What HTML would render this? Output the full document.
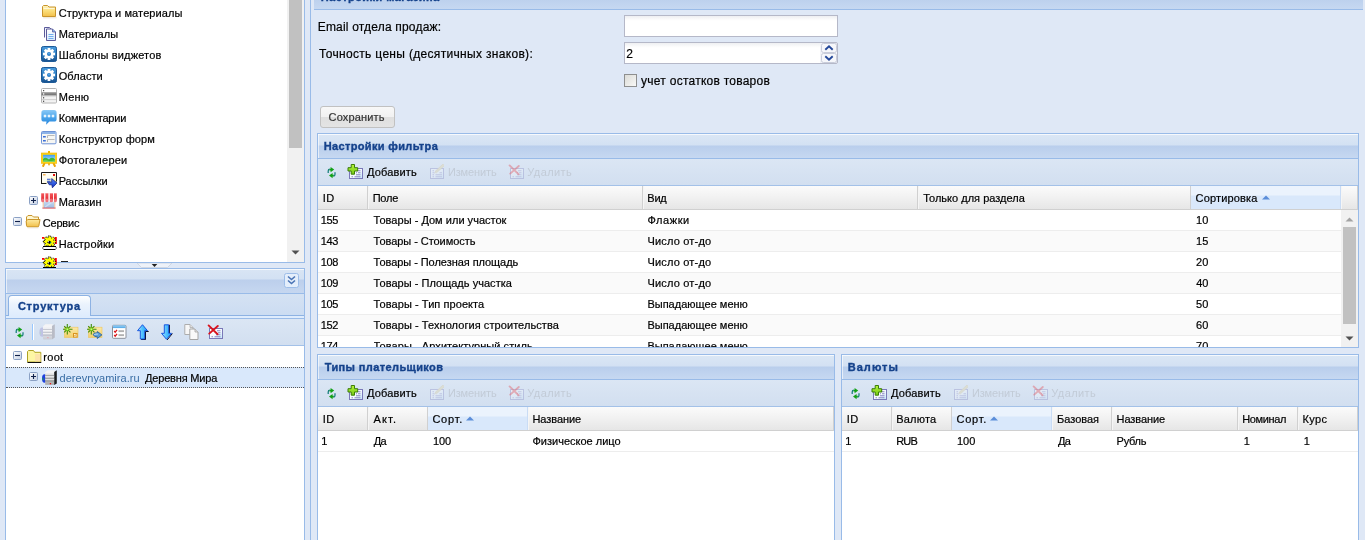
<!DOCTYPE html>
<html><head><meta charset="utf-8"><title>Admin</title>
<style>
html,body{margin:0;padding:0;}
body{width:1365px;height:540px;overflow:hidden;background:#dfe8f6;position:relative;font-family:"Liberation Sans",sans-serif;}
div,span,svg{position:absolute;display:block;}
span{white-space:pre;line-height:1;}
div>svg{left:0;top:0;}
</style></head><body>
<div style="left:5px;top:-10px;width:300px;height:273px;background:#fff;border:1px solid #99bbe8;box-sizing:border-box;"></div>
<div style="left:287px;top:-10px;width:17px;height:272px;background:#f1f1f1;"></div>
<div style="left:289px;top:-10px;width:13px;height:158px;background:#c1c1c1;"></div>
<svg style="left:291px;top:250px" width="9" height="5"><path d="M0.5 0.5h8l-4 4z" fill="#505050"/></svg>
<div style="left:41px;top:4px;width:16px;height:16px;"><svg width="16" height="16" viewBox="0 0 16 16"><defs><linearGradient id="g1" x1="0" y1="0" x2="0" y2="1"><stop offset="0" stop-color="#fef4c4"/><stop offset="0.45" stop-color="#fbe07e"/><stop offset="1" stop-color="#f3c049"/></linearGradient></defs><path d="M2.2 13.8h13.3" stroke="#e9e2cf" stroke-width="1"/><path d="M1.5 12.5v-10l1-1h4l1.5 1.5h6.5v9.5z" fill="url(#g1)" stroke="#c9952c" stroke-width="1"/><path d="M2.5 4.5h11" stroke="#fff8dc" stroke-width="1" opacity=".9"/></svg></div>
<div style="left:41px;top:25px;width:16px;height:16px;"><svg width="16" height="16" viewBox="0 0 16 16"><defs><linearGradient id="g3" x1="0" y1="0" x2="0" y2="1"><stop offset="0" stop-color="#ffffff"/><stop offset="1" stop-color="#d6e9fb"/></linearGradient></defs><path d="M3.5 12.5v-10h5l2 2" fill="#f2f4fb" stroke="#5b5b9b"/><path d="M5.5 15.5v-11.5h6l3 3v8.5z" fill="url(#g3)" stroke="#5b5b9b"/><path d="M11.5 4v3h3" fill="#7db4ee" stroke="#5b5b9b" stroke-width=".8"/><path d="M7.5 9.5h5M7.5 11.5h5M7.5 13.5h5" stroke="#72aeee" stroke-width="1.2"/></svg></div>
<div style="left:41px;top:46px;width:16px;height:16px;"><svg width="16" height="16" viewBox="0 0 16 16"><defs><linearGradient id="g4" x1="0" y1="0" x2="0" y2="1"><stop offset="0" stop-color="#4a9bdc"/><stop offset="0.5" stop-color="#2d7fc4"/><stop offset="1" stop-color="#174f8c"/></linearGradient></defs><rect x="0.5" y="0.5" width="15" height="15" rx="1.8" fill="url(#g4)" stroke="#1d5a97"/><polygon points="6.65,1.95 9.35,1.95 9.47,3.85 9.90,4.03 11.32,2.76 13.24,4.68 11.97,6.10 12.15,6.53 14.05,6.65 14.05,9.35 12.15,9.47 11.97,9.90 13.24,11.32 11.32,13.24 9.90,11.97 9.47,12.15 9.35,14.05 6.65,14.05 6.53,12.15 6.10,11.97 4.68,13.24 2.76,11.32 4.03,9.90 3.85,9.47 1.95,9.35 1.95,6.65 3.85,6.53 4.03,6.10 2.76,4.68 4.68,2.76 6.10,4.03 6.53,3.85" fill="#fff"/><circle cx="8" cy="8" r="2" fill="#2b7cc4"/><circle cx="8" cy="7.6" r="1" fill="#5aa6e6"/></svg></div>
<div style="left:41px;top:67px;width:16px;height:16px;"><svg width="16" height="16" viewBox="0 0 16 16"><defs><linearGradient id="g4" x1="0" y1="0" x2="0" y2="1"><stop offset="0" stop-color="#4a9bdc"/><stop offset="0.5" stop-color="#2d7fc4"/><stop offset="1" stop-color="#174f8c"/></linearGradient></defs><rect x="0.5" y="0.5" width="15" height="15" rx="1.8" fill="url(#g4)" stroke="#1d5a97"/><polygon points="6.65,1.95 9.35,1.95 9.47,3.85 9.90,4.03 11.32,2.76 13.24,4.68 11.97,6.10 12.15,6.53 14.05,6.65 14.05,9.35 12.15,9.47 11.97,9.90 13.24,11.32 11.32,13.24 9.90,11.97 9.47,12.15 9.35,14.05 6.65,14.05 6.53,12.15 6.10,11.97 4.68,13.24 2.76,11.32 4.03,9.90 3.85,9.47 1.95,9.35 1.95,6.65 3.85,6.53 4.03,6.10 2.76,4.68 4.68,2.76 6.10,4.03 6.53,3.85" fill="#fff"/><circle cx="8" cy="8" r="2" fill="#2b7cc4"/><circle cx="8" cy="7.6" r="1" fill="#5aa6e6"/></svg></div>
<div style="left:41px;top:88px;width:16px;height:16px;"><svg width="16" height="16" viewBox="0 0 16 16"><defs><linearGradient id="g5" x1="0" y1="0" x2="0" y2="1"><stop offset="0" stop-color="#9a9a9a"/><stop offset="1" stop-color="#6b6b6b"/></linearGradient></defs><rect x="0.5" y="0.5" width="15" height="14.5" rx="1" fill="#f3f3f3" stroke="#b4b4b4"/><rect x="1" y="1" width="14" height="3" fill="#fff"/><rect x="0.5" y="4.2" width="15" height="3.3" fill="url(#g5)"/><path d="M1 8h14M1 11.6h14" stroke="#c4c4c4" stroke-width=".8"/><rect x="2" y="2" width="1.2" height="1.2" fill="#555"/><rect x="2" y="5.3" width="1.3" height="1.3" fill="#fff"/><rect x="2" y="9.2" width="1.2" height="1.2" fill="#444"/><rect x="2" y="12.7" width="1.2" height="1.2" fill="#444"/></svg></div>
<div style="left:41px;top:109px;width:16px;height:16px;"><svg width="16" height="16" viewBox="0 0 16 16"><defs><linearGradient id="g6" x1="0" y1="0" x2="0" y2="1"><stop offset="0" stop-color="#8ccaf7"/><stop offset="0.45" stop-color="#4fa8ec"/><stop offset="1" stop-color="#2585dd"/></linearGradient></defs><path d="M3 1h10q2.6 0 2.6 2.6v6.3q0 2.6-2.6 2.6h-4.6l-3.3 3.2.4-3.2h-2.5q-2.6 0-2.6-2.6v-6.3q0-2.6 2.6-2.6z" fill="url(#g6)"/><circle cx="4" cy="7" r="1.7" fill="#9fd2f8"/><circle cx="8" cy="7" r="1.7" fill="#9fd2f8"/><circle cx="12" cy="7" r="1.7" fill="#9fd2f8"/><circle cx="4" cy="7" r="1" fill="#fff"/><circle cx="8" cy="7" r="1" fill="#fff"/><circle cx="12" cy="7" r="1" fill="#fff"/></svg></div>
<div style="left:41px;top:130px;width:16px;height:16px;"><svg width="16" height="16" viewBox="0 0 16 16"><rect x="0.5" y="1.5" width="14.5" height="12.3" rx="1" fill="#f6f6f3" stroke="#6d92d6"/><rect x="1" y="2" width="13.5" height="2" fill="#8db3e8"/><rect x="2" y="6" width="2.8" height="1.5" fill="#3b6fd8"/><rect x="2" y="10" width="2.8" height="1.5" fill="#3b6fd8"/><path d="M6.5 8v-2.5h7M6.5 12v-2.5h7" fill="none" stroke="#b9b9b9"/></svg></div>
<div style="left:41px;top:151px;width:16px;height:16px;"><svg width="16" height="16" viewBox="0 0 16 16"><defs><linearGradient id="g7" x1="0" y1="0" x2="0" y2="1"><stop offset="0" stop-color="#3c9df0"/><stop offset="1" stop-color="#cdeafc"/></linearGradient></defs><rect x="7" y="0" width="2" height="2.5" fill="#f0b400"/><path d="M3.6 12l-1.8 3.8M12.4 12l1.8 3.8" stroke="#e9a40c" stroke-width="2"/><rect x="7.2" y="12" width="1.6" height="2.3" fill="#e9a40c"/><rect x="0.2" y="2" width="15.6" height="10.3" fill="#fcd116"/><rect x="0.2" y="2" width="15.6" height="10.3" fill="none" stroke="#f0b400" stroke-width=".6"/><rect x="2" y="3.8" width="12" height="6.8" fill="url(#g7)"/><path d="M2 10.6v-2.6q2-2.2 4.5-.6l1.5 1q1.2-1.8 3.2-1.6t2.8 1.6v2.2z" fill="#3db83a"/><path d="M2 10.6v-1.2q2.5-1.5 5 0t7-.4v1.6z" fill="#6fd35a" opacity=".8"/></svg></div>
<div style="left:41px;top:172px;width:16px;height:16px;"><svg width="16" height="16" viewBox="0 0 16 16"><defs><linearGradient id="g8" x1="0" y1="0" x2="1" y2="1"><stop offset="0" stop-color="#ffffff"/><stop offset="0.5" stop-color="#fffef0"/><stop offset="1" stop-color="#fbf08a"/></linearGradient><linearGradient id="g9" x1="0" y1="0" x2="0" y2="1"><stop offset="0" stop-color="#5a8cff"/><stop offset="1" stop-color="#1030c0"/></linearGradient></defs><rect x="0.5" y="0.5" width="15" height="11" fill="url(#g8)"/><path d="M0.5 11.5v-11h15v9" fill="none" stroke="#1a1a1a" stroke-width="1"/><path d="M0 11.5h5.5" stroke="#1a1a1a"/><rect x="2" y="2.2" width="2.6" height="1.2" fill="#f0a030"/><rect x="12" y="2" width="2" height="2" fill="#e01010"/><path d="M6 7.2h3.5M6 9.2h3.5" stroke="#2a4fd0" stroke-width="1.1"/><path d="M6.5 10.2h4.2v-3.6l5.3 4.3-4.6 4.9-.6-3h-2.5z" fill="url(#g9)" stroke="#0a1a80" stroke-width=".7"/></svg></div>
<div style="left:41px;top:193px;width:16px;height:16px;"><svg width="16" height="16" viewBox="0 0 16 16"><defs><linearGradient id="g10" x1="0" y1="0" x2="0" y2="1"><stop offset="0" stop-color="#f4585c"/><stop offset="1" stop-color="#e0242c"/></linearGradient><linearGradient id="g11" x1="0" y1="0" x2="0" y2="1"><stop offset="0" stop-color="#c9dcf2"/><stop offset="1" stop-color="#9dbbe2"/></linearGradient></defs><rect x="2.6" y="8" width="10.8" height="7" fill="url(#g11)"/><path d="M4 14l8-5.5" stroke="#dbe8f8" stroke-width="1.5" opacity=".7"/><rect x="1.6" y="8.5" width="1.4" height="6.5" fill="#ecd0b4"/><rect x="13" y="8.5" width="1.4" height="6.5" fill="#ecd0b4"/><rect x="1.4" y="14.6" width="13.2" height="1" fill="#d9555c"/><rect x="0.2" y="0.3" width="3.1" height="7" fill="url(#g10)"/><rect x="4.2" y="0.3" width="3.4" height="7" fill="url(#g10)"/><rect x="8.6" y="0.3" width="3.4" height="7" fill="url(#g10)"/><rect x="12.9" y="0.3" width="2.9" height="7" fill="url(#g10)"/><ellipse cx="1.75" cy="7.4" rx="1.55" ry="1.9" fill="#f07078"/><ellipse cx="5.9" cy="7.4" rx="1.7" ry="1.9" fill="#f07078"/><ellipse cx="10.299999999999999" cy="7.4" rx="1.7" ry="1.9" fill="#f07078"/><ellipse cx="14.35" cy="7.4" rx="1.45" ry="1.9" fill="#f07078"/><rect x="3.3" y="0.3" width="1" height="8.6" fill="#fff6f6"/><rect x="7.6" y="0.3" width="1" height="8.6" fill="#fff6f6"/><rect x="12" y="0.3" width="1" height="8.6" fill="#fff6f6"/></svg></div>
<div style="left:25px;top:214px;width:16px;height:16px;"><svg width="16" height="16" viewBox="0 0 16 16"><defs><linearGradient id="g2" x1="0" y1="0" x2="0" y2="1"><stop offset="0" stop-color="#fdeaa0"/><stop offset="1" stop-color="#f1bf48"/></linearGradient></defs><path d="M1.5 11.5v-8.5l1.5-1.5h4l1.5 1.5h5v3" fill="#fef6cf" stroke="#c9952c"/><path d="M1.2 7.2l1.5-1.7h12.3l-1.2 6.4q-.2 1-1.2 1h-9.6q-1.4 0-1.5-1.3z" fill="url(#g2)" stroke="#c9952c"/><path d="M2.5 13.8h11" stroke="#e9e2cf"/></svg></div>
<div style="left:41px;top:235px;width:16px;height:16px;"><svg width="16" height="16" viewBox="0 0 16 16"><rect x="1" y="2" width="2.4" height="1.8" fill="#f00"/><rect x="13.6" y="2" width="2.2" height="7" fill="#f00"/><polygon points="7.25,0.92 9.75,0.92 10.01,2.90 10.27,3.00 11.98,1.77 13.75,3.40 12.42,4.97 12.52,5.21 14.67,5.45 14.67,7.75 12.52,7.99 12.42,8.23 13.75,9.80 11.98,11.43 10.27,10.20 10.01,10.30 9.75,12.28 7.25,12.28 6.99,10.30 6.73,10.20 5.02,11.43 3.25,9.80 4.58,8.23 4.48,7.99 2.33,7.75 2.33,5.45 4.48,5.21 4.58,4.97 3.25,3.40 5.02,1.77 6.73,3.00 6.99,2.90" fill="#ffff00" stroke="#000" stroke-width="1" stroke-dasharray="1.2 1"/><path d="M6 7.5l2-2 2.5 1.5-1.8 2z" fill="#000"/><path d="M9 7l1.5.8-.8 1z" fill="#0cc"/><path d="M7 7.2l1-.8" stroke="#fff"/><path d="M2 11.5h13M2.5 14.5h12" stroke="#000" stroke-width="1"/><path d="M2 12v2M15 12v2" stroke="#000" stroke-width=".8"/><rect x="2.5" y="12" width="12" height="2" fill="#fff"/></svg></div>
<div style="left:41px;top:256px;width:16px;height:16px;"><svg width="16" height="16" viewBox="0 0 16 16"><rect x="1" y="2" width="2.4" height="1.8" fill="#f00"/><rect x="13.6" y="2" width="2.2" height="7" fill="#f00"/><polygon points="7.25,0.92 9.75,0.92 10.01,2.90 10.27,3.00 11.98,1.77 13.75,3.40 12.42,4.97 12.52,5.21 14.67,5.45 14.67,7.75 12.52,7.99 12.42,8.23 13.75,9.80 11.98,11.43 10.27,10.20 10.01,10.30 9.75,12.28 7.25,12.28 6.99,10.30 6.73,10.20 5.02,11.43 3.25,9.80 4.58,8.23 4.48,7.99 2.33,7.75 2.33,5.45 4.48,5.21 4.58,4.97 3.25,3.40 5.02,1.77 6.73,3.00 6.99,2.90" fill="#ffff00" stroke="#000" stroke-width="1" stroke-dasharray="1.2 1"/><path d="M6 7.5l2-2 2.5 1.5-1.8 2z" fill="#000"/><path d="M9 7l1.5.8-.8 1z" fill="#0cc"/><path d="M7 7.2l1-.8" stroke="#fff"/><path d="M2 11.5h13M2.5 14.5h12" stroke="#000" stroke-width="1"/><path d="M2 12v2M15 12v2" stroke="#000" stroke-width=".8"/><rect x="2.5" y="12" width="12" height="2" fill="#fff"/></svg></div>
<div style="left:29px;top:196px;width:16px;height:16px;"><svg width="9" height="9" viewBox="0 0 9 9"><defs><linearGradient id="g12" x1="0" y1="0" x2="1" y2="1"><stop offset="0" stop-color="#ffffff"/><stop offset="1" stop-color="#c3cfe4"/></linearGradient></defs><rect x="0.5" y="0.5" width="8" height="8" rx="1" fill="url(#g12)" stroke="#8aa0c4"/><path d="M2 4.5h5M4.5 2v5" stroke="#10204a" stroke-width="1.1"/></svg></div>
<div style="left:13px;top:217px;width:16px;height:16px;"><svg width="9" height="9" viewBox="0 0 9 9"><defs><linearGradient id="g13" x1="0" y1="0" x2="1" y2="1"><stop offset="0" stop-color="#ffffff"/><stop offset="1" stop-color="#c3cfe4"/></linearGradient></defs><rect x="0.5" y="0.5" width="8" height="8" rx="1" fill="url(#g13)" stroke="#8aa0c4"/><path d="M2 4.5h5" stroke="#10204a" stroke-width="1.1"/></svg></div>
<div style="left:61px;top:261px;width:7px;height:1px;background:#222;"></div>
<svg style="left:137px;top:263px" width="35" height="5"><path d="M0 0h35l-4.5 4.5h-26z" fill="#eef2f9" stroke="#c9d2e0" stroke-width="0.8"/><path d="M14.7 1h5.6l-2.8 3z" fill="#222"/></svg>
<div style="left:5px;top:268px;width:300px;height:290px;background:#fff;border:1px solid #99bbe8;box-sizing:border-box;"></div>
<div style="left:6px;top:269px;width:298px;height:24px;background:linear-gradient(#d9e5f4 0,#d3e1f3 10px,#bccfec 11px,#c6d7f0 100%);"></div>
<div style="left:6px;top:293px;width:298px;height:1px;background:#99bbe8;"></div>
<div style="left:6px;top:269px;width:298px;height:1px;background:rgba(255,255,255,.75);"></div>
<div style="left:6px;top:269px;width:1px;height:24px;background:rgba(255,255,255,.6);"></div>
<svg style="left:284px;top:273px" width="15" height="15"><rect x="0.5" y="0.5" width="14" height="14" rx="2" fill="#e4eefb" stroke="#9dbde8"/><path d="M4 3.5l3.5 3 3.5-3M4 7.5l3.5 3 3.5-3" fill="none" stroke="#4a74b5" stroke-width="1.6"/></svg>
<div style="left:6px;top:294px;width:298px;height:22px;background:linear-gradient(#d5e2f3,#cbdcf2);"></div>
<div style="left:6px;top:315px;width:298px;height:1px;background:#8db2e3;"></div>
<div style="left:6px;top:316px;width:298px;height:2px;background:#deecfd;"></div>
<div style="left:6px;top:318px;width:298px;height:1px;background:#99bbe8;"></div>
<div style="left:8px;top:295px;width:83px;height:21px;background:linear-gradient(#fff 0,#ebf3fd 40%,#deecfd 100%);border:1px solid #8db2e3;border-bottom:none;border-radius:4px 4px 0 0;box-sizing:border-box;"></div>
<div style="left:6px;top:319px;width:298px;height:26px;background:linear-gradient(#dbe6f4,#d2dff0);"></div>
<div style="left:6px;top:345px;width:298px;height:1px;background:#a3c1e8;"></div>
<div style="left:12px;top:325px;width:16px;height:16px;"><svg width="16" height="16" viewBox="0 0 16 16"><path d="M6.6 1.9l3.6 2.7-3.6 2.7v-1.9h-1.2v-1.6h1.2z" fill="#12a116"/><path d="M5.6 4q-1.4.3-1.4 1.9v2" fill="none" stroke="#0e7a78" stroke-width="1.2"/><path d="M8.6 7.9l-3.6 2.7 3.6 2.7v-1.9h1.2v-1.6h-1.2z" fill="#12a116"/><path d="M9.6 11.2q1.4-.3 1.4-1.9v-2" fill="none" stroke="#0e7a78" stroke-width="1.2"/></svg></div>
<div style="left:32px;top:324px;width:1px;height:16px;background:#98c8ff;"></div>
<div style="left:33px;top:324px;width:1px;height:16px;background:#fff;"></div>
<div style="left:39px;top:324px;width:16px;height:16px;"><svg width="16" height="16" viewBox="0 0 16 16"><defs><linearGradient id="g20" x1="0" y1="0" x2="0" y2="1"><stop offset="0" stop-color="#f6f6f8"/><stop offset="1" stop-color="#c9ccd4"/></linearGradient></defs><ellipse cx="3.2" cy="8.2" rx="2.8" ry="4.6" fill="#bfc3e4"/><path d="M1 7q1.3 1 .9 3.5l-1-.6z" fill="#b7d4c8"/><path d="M4 2.2l2.3-2h7.7l-1 2z" fill="#f4f4f6"/><rect x="4" y="2" width="9" height="13.5" rx=".8" fill="url(#g20)"/><path d="M13 2l2.8-1.8v13.3l-2.8 2z" fill="#b9bcc6"/><path d="M4 5.5h9M4 8.5h9M4 11.2h9" stroke="#b4b7c2" stroke-width=".8"/><path d="M4 6.3h9M4 9.3h9" stroke="#fafafa" stroke-width=".8"/><rect x="8.3" y="13" width="1.2" height="1.2" fill="#e9a0aa"/></svg></div>
<div style="left:63px;top:324px;width:16px;height:16px;"><svg width="16" height="16" viewBox="0 0 16 16"><defs><linearGradient id="g21" x1="0" y1="0" x2="0" y2="1"><stop offset="0" stop-color="#fbe8a6"/><stop offset="1" stop-color="#f3cf6c"/></linearGradient></defs><rect x="1.5" y="3.2" width="13.5" height="10.3" fill="url(#g21)" stroke="#edc55c" stroke-width=".6"/><rect x="10.5" y="9.5" width="3.6" height="3.6" fill="#fdf1c8" stroke="#d9931e"/><path d="M11.5 12l1.6-1.6" stroke="#d9931e"/><path d="M4.3 5.2L9.50 5.20M4.3 5.2L7.41 8.31M4.3 5.2L4.30 10.40M4.3 5.2L1.19 8.31M4.3 5.2L-0.90 5.20M4.3 5.2L1.19 2.09M4.3 5.2L4.30 0.00M4.3 5.2L7.41 2.09" stroke="#3f8f0a" stroke-width="1.1"/><circle cx="4.3" cy="5.2" r="1.8" fill="#7ed321"/><circle cx="4.3" cy="5.2" r=".8" fill="#d9ff8a"/></svg></div>
<div style="left:87px;top:324px;width:16px;height:16px;"><svg width="16" height="16" viewBox="0 0 16 16"><defs><linearGradient id="g22" x1="0" y1="0" x2="0" y2="1"><stop offset="0" stop-color="#fbe8a6"/><stop offset="1" stop-color="#f3cf6c"/></linearGradient></defs><rect x="1.5" y="3.2" width="13.5" height="10.3" fill="url(#g22)" stroke="#edc55c" stroke-width=".6"/><path d="M6 10.5q1.2-2 4.3-1.6v-1.4l4.6 3.4-4.6 3.6v-1.7q-3 .4-4.3-2.3z" fill="#5b9fd8" stroke="#1d5a9c" stroke-width=".8"/><path d="M7.3 10.6q1.5-.9 3.6-.5" stroke="#d6ecff" stroke-width=".9" fill="none"/><path d="M4.3 5.2L9.50 5.20M4.3 5.2L7.41 8.31M4.3 5.2L4.30 10.40M4.3 5.2L1.19 8.31M4.3 5.2L-0.90 5.20M4.3 5.2L1.19 2.09M4.3 5.2L4.30 0.00M4.3 5.2L7.41 2.09" stroke="#3f8f0a" stroke-width="1.1"/><circle cx="4.3" cy="5.2" r="1.8" fill="#7ed321"/><circle cx="4.3" cy="5.2" r=".8" fill="#d9ff8a"/></svg></div>
<div style="left:111px;top:324px;width:16px;height:16px;"><svg width="16" height="16" viewBox="0 0 16 16"><rect x="1.5" y="1.3" width="13.5" height="13" rx="1" fill="#fff" stroke="#8a8f9a"/><rect x="2" y="1.5" width="12.5" height="2.6" fill="#5fb0ea"/><path d="M2 2h12.5" stroke="#9fd2f6"/><path d="M3.2 7l1 1.2 1.8-2.4M3.2 11l1 1.2 1.8-2.4" fill="none" stroke="#d8161c" stroke-width="1.3"/><rect x="7.5" y="6.2" width="5.5" height="1.9" fill="#b1b1b1"/><rect x="7.5" y="10.2" width="5.5" height="1.9" fill="#b1b1b1"/></svg></div>
<div style="left:135px;top:324px;width:16px;height:16px;"><svg width="16" height="16" viewBox="0 0 16 16"><defs><linearGradient id="g23" x1="0" y1="0" x2="1" y2="0"><stop offset="0" stop-color="#a5e6ff"/><stop offset="0.5" stop-color="#4fc0ff"/><stop offset="1" stop-color="#1f9df2"/></linearGradient></defs><path d="M12.9 6.9l.5.6h-2.9v8.1h-4.4" fill="none" stroke="#0a0a20" stroke-width="1"/><path d="M7.5 0.7l5 6h-2.8v8.3h-4.4v-8.3h-2.8z" fill="url(#g23)" stroke="#0b48dc" stroke-width=".9"/></svg></div>
<div style="left:159px;top:324px;width:16px;height:16px;"><svg width="16" height="16" viewBox="0 0 16 16"><defs><linearGradient id="g24" x1="0" y1="0" x2="1" y2="0"><stop offset="0" stop-color="#a5e6ff"/><stop offset="0.5" stop-color="#4fc0ff"/><stop offset="1" stop-color="#1f9df2"/></linearGradient></defs><path d="M8.2 15.9l5.2-6.4M10.4 9v-8.2" fill="none" stroke="#0a0a20" stroke-width="1"/><path d="M7.5 15.3l5-6h-2.8v-8.5h-4.4v8.5h-2.8z" fill="url(#g24)" stroke="#0b48dc" stroke-width=".9"/></svg></div>
<div style="left:183px;top:324px;width:16px;height:16px;"><svg width="16" height="16" viewBox="0 0 16 16"><path d="M1.8 10.5v-10h5.2l3 3v7z" fill="#f7f7f7" stroke="#adadad"/><path d="M7 .5v3h3" fill="#e2e2e2" stroke="#adadad" stroke-width=".8"/><path d="M6.8 15.5v-10.5h5.2l3 3v7.5z" fill="#f9f9f9" stroke="#a5a5a5"/><path d="M12 5v3h3" fill="#e0e0e0" stroke="#a5a5a5" stroke-width=".8"/></svg></div>
<div style="left:207px;top:324px;width:16px;height:16px;"><svg width="16" height="16" viewBox="0 0 16 16"><defs><linearGradient id="g18" x1="0" y1="0" x2="1" y2="1"><stop offset="0" stop-color="#ffffff"/><stop offset="0.55" stop-color="#f4f9fe"/><stop offset="1" stop-color="#bfe6fa"/></linearGradient></defs><rect x="2.5" y="4.5" width="13" height="10" fill="url(#g18)" stroke="#7a78b8"/><path d="M10 6.8h3.5M9 8.8h1M11 8.8h2.5M9 10.8h4.5M4.5 12.8h1.5M7.5 12.8h6" stroke="#8a86c2" stroke-width="1.1"/><path d="M1.6 1.4l9 8.8M10.8 2l-8.6 7.6" stroke="#d9141e" stroke-width="1.9" stroke-linecap="round"/></svg></div>
<div style="left:13px;top:351px;width:16px;height:16px;"><svg width="9" height="9" viewBox="0 0 9 9"><defs><linearGradient id="g13" x1="0" y1="0" x2="1" y2="1"><stop offset="0" stop-color="#ffffff"/><stop offset="1" stop-color="#c3cfe4"/></linearGradient></defs><rect x="0.5" y="0.5" width="8" height="8" rx="1" fill="url(#g13)" stroke="#8aa0c4"/><path d="M2 4.5h5" stroke="#10204a" stroke-width="1.1"/></svg></div>
<div style="left:26px;top:349px;width:16px;height:16px;"><svg width="16" height="16" viewBox="0 0 16 16"><path d="M1.5 13v-10.5l1-1h5l1.2 1.8h6.1v9.7z" fill="#fdf6a4" stroke="#aea224"/><path d="M9 5h5.5v7.5h-5.5z" fill="#fbdcae" opacity=".75"/><path d="M1.5 13.5h13.8" stroke="#111"/></svg></div>
<div style="left:6px;top:367px;width:298px;height:21px;background:#d9e8fb;border-top:1px dotted #555;border-bottom:1px dotted #555;box-sizing:border-box;"></div>
<div style="left:29px;top:372px;width:16px;height:16px;"><svg width="9" height="9" viewBox="0 0 9 9"><defs><linearGradient id="g12" x1="0" y1="0" x2="1" y2="1"><stop offset="0" stop-color="#ffffff"/><stop offset="1" stop-color="#c3cfe4"/></linearGradient></defs><rect x="0.5" y="0.5" width="8" height="8" rx="1" fill="url(#g12)" stroke="#8aa0c4"/><path d="M2 4.5h5M4.5 2v5" stroke="#10204a" stroke-width="1.1"/></svg></div>
<div style="left:41px;top:370px;width:16px;height:16px;"><svg width="16" height="16" viewBox="0 0 16 16"><defs><linearGradient id="g19" x1="0" y1="0" x2="0" y2="1"><stop offset="0" stop-color="#fafafa"/><stop offset="0.3" stop-color="#d2d2d2"/><stop offset="1" stop-color="#a9a9a9"/></linearGradient></defs><ellipse cx="3.6" cy="8.5" rx="2.6" ry="4.2" fill="#1f3fe0"/><path d="M1.5 7q1.5 1 1 3.5l-1-.5z" fill="#1ea04a"/><path d="M4.2 2.2l2.3-2h7.5v1.8z" fill="#f4f4f4"/><rect x="4.2" y="2" width="9" height="12.8" fill="url(#g19)"/><path d="M13.2 2l2.6-1.8v13.3l-2.6 1.4z" fill="#1c1c1c"/><path d="M4.2 5.5h9M4.2 8.5h9M4.2 11h9" stroke="#8a8a8a" stroke-width=".8"/><path d="M4.2 6.3h9M4.2 9.3h9" stroke="#f2f2f2" stroke-width=".8"/><rect x="8.8" y="13" width="1.3" height="1.3" fill="#f01818"/></svg></div>
<div style="left:310px;top:-10px;width:1100px;height:600px;border:1px solid #99bbe8;box-sizing:border-box;background:#dfe8f6;"></div>
<div style="left:314px;top:-16px;width:1049px;height:25px;background:linear-gradient(#dbe7f5 0,#d3e1f3 11px,#b9ceec 12px,#c6d8f1 100%);"></div>
<div style="left:314px;top:9px;width:1049px;height:1px;background:#99bbe8;"></div>
<div style="left:624px;top:15px;width:214px;height:22px;background:linear-gradient(#eeeff2 0,#fdfdfd 4px,#fff 5px);border:1px solid #b5b8c8;box-sizing:border-box;"></div>
<div style="left:624px;top:42px;width:214px;height:22px;background:linear-gradient(#eeeff2 0,#fdfdfd 4px,#fff 5px);border:1px solid #b5b8c8;box-sizing:border-box;"></div>
<svg style="left:820px;top:42px" width="18" height="22"><rect x="0" y="0" width="18" height="22" fill="#dfe8f6"/><path d="M0 .5h16q1.5 0 1.5 1.5v18q0 1.5-1.5 1.5h-16" fill="#f1f3f8" stroke="#b5b8c8"/><rect x="1.5" y="1.5" width="15" height="9" rx="2" fill="#f6f7fb" stroke="#c9cddb"/><rect x="1.5" y="11.5" width="15" height="9" rx="2" fill="#f6f7fb" stroke="#c9cddb"/><path d="M5.3 7.8l3.7-3.4 3.7 3.4M5.3 14.2l3.7 3.4 3.7-3.4" fill="none" stroke="#24489a" stroke-width="1.9"/></svg>
<div style="left:624px;top:74px;width:13px;height:13px;background:linear-gradient(135deg,#dcdcd8,#f8f8f6);border:1px solid #8e8f8f;box-sizing:border-box;"></div>
<div style="left:320px;top:106px;width:75px;height:22px;background:linear-gradient(#f8f8f8 0,#f1f1f1 50%,#dfdfdf 51%,#e4e4e4 100%);border:1px solid #c1c1c1;border-radius:3px;box-sizing:border-box;"></div>
<div style="left:317px;top:133px;width:1042px;height:215px;border:1px solid #99bbe8;box-sizing:border-box;background:#fff;"></div>
<div style="left:318px;top:134px;width:1040px;height:24px;background:linear-gradient(#dbe7f5 0,#d3e1f3 11px,#b9ceec 12px,#c6d8f1 100%);"></div>
<div style="left:318px;top:158px;width:1040px;height:1px;background:#99bbe8;"></div>
<div style="left:318px;top:134px;width:1040px;height:1px;background:rgba(255,255,255,.75);"></div>
<div style="left:318px;top:134px;width:1px;height:24px;background:rgba(255,255,255,.6);"></div>
<div style="left:318px;top:159px;width:1040px;height:26px;background:linear-gradient(#dbe6f4,#d2dff0);"></div>
<div style="left:318px;top:185px;width:1040px;height:1px;background:#a3c1e8;"></div>
<div style="left:324px;top:165px;width:16px;height:16px;"><svg width="16" height="16" viewBox="0 0 16 16"><path d="M6.6 1.9l3.6 2.7-3.6 2.7v-1.9h-1.2v-1.6h1.2z" fill="#12a116"/><path d="M5.6 4q-1.4.3-1.4 1.9v2" fill="none" stroke="#0e7a78" stroke-width="1.2"/><path d="M8.6 7.9l-3.6 2.7 3.6 2.7v-1.9h1.2v-1.6h-1.2z" fill="#12a116"/><path d="M9.6 11.2q1.4-.3 1.4-1.9v-2" fill="none" stroke="#0e7a78" stroke-width="1.2"/></svg></div>
<div style="left:347px;top:164px;width:16px;height:16px;"><svg width="16" height="16" viewBox="0 0 16 16"><defs><linearGradient id="g15" x1="0" y1="0" x2="1" y2="1"><stop offset="0" stop-color="#ffffff"/><stop offset="0.55" stop-color="#f4f9fe"/><stop offset="1" stop-color="#bfe6fa"/></linearGradient></defs><rect x="2.5" y="4.5" width="13" height="10" fill="url(#g15)" stroke="#7a78b8"/><path d="M10 6.8h3.5M9 8.8h1M11 8.8h2.5M9 10.8h4.5M4.5 12.8h1.5M7.5 12.8h6" stroke="#8a86c2" stroke-width="1.1"/><defs><linearGradient id="g14" x1="0" y1="0" x2="0" y2="1"><stop offset="0" stop-color="#b5f53a"/><stop offset="1" stop-color="#74c814"/></linearGradient></defs><path d="M4.2 0.5h3.3v3.2h3.2v3.3h-3.2v3.2h-3.3v-3.2h-3.2v-3.3h3.2z" fill="url(#g14)" stroke="#3b7d08" stroke-width="1"/></svg></div>
<div style="left:428px;top:164px;width:16px;height:16px;"><svg width="16" height="16" viewBox="0 0 16 16"><g opacity=".3"><defs><linearGradient id="g16" x1="0" y1="0" x2="1" y2="1"><stop offset="0" stop-color="#ffffff"/><stop offset="0.55" stop-color="#f4f9fe"/><stop offset="1" stop-color="#bfe6fa"/></linearGradient></defs><rect x="2.5" y="4.5" width="13" height="10" fill="url(#g16)" stroke="#7a78b8"/><path d="M4.5 6.8h1.5M4.5 8.8h2M11.5 8.8h2.5M4.5 10.8h1.5M7.5 10.8h6.5M4.5 12.8h1.5M7.5 12.8h6.5" stroke="#8a86c2" stroke-width="1.1"/><path d="M7 7.5l1.5 1.3 8-7.2-1.6-1.5z" fill="#e3cf8f" stroke="#cbb26a" stroke-width=".6"/><path d="M7 7.5l-.8 2 2.3-.7z" fill="#d8c49a"/></g></svg></div>
<div style="left:508px;top:164px;width:16px;height:16px;"><svg width="16" height="16" viewBox="0 0 16 16"><g opacity=".3"><defs><linearGradient id="g17" x1="0" y1="0" x2="1" y2="1"><stop offset="0" stop-color="#ffffff"/><stop offset="0.55" stop-color="#f4f9fe"/><stop offset="1" stop-color="#bfe6fa"/></linearGradient></defs><rect x="2.5" y="4.5" width="13" height="10" fill="url(#g17)" stroke="#7a78b8"/><path d="M10 6.8h3.5M9 8.8h1M11 8.8h2.5M9 10.8h4.5M4.5 12.8h1.5M7.5 12.8h6" stroke="#8a86c2" stroke-width="1.1"/></g><g opacity=".55"><path d="M1.6 1.4l9 8.8M10.8 2l-8.6 7.6" stroke="#e07882" stroke-width="1.9" stroke-linecap="round"/></g></svg></div>
<div style="left:318px;top:186px;width:1040px;height:23px;background:linear-gradient(#fbfbfb 0,#f1f1f1 50%,#e6e6e6 100%);"></div>
<div style="left:318px;top:209px;width:1040px;height:1px;background:#d0d0d0;"></div>
<div style="left:367px;top:186px;width:1px;height:23px;background:#d0d0d0;"></div>
<div style="left:642px;top:186px;width:1px;height:23px;background:#d0d0d0;"></div>
<div style="left:368px;top:186px;width:1px;height:23px;background:#f5f5f5;"></div>
<div style="left:917px;top:186px;width:1px;height:23px;background:#d0d0d0;"></div>
<div style="left:643px;top:186px;width:1px;height:23px;background:#f5f5f5;"></div>
<div style="left:1190px;top:186px;width:1px;height:23px;background:#d0d0d0;"></div>
<div style="left:918px;top:186px;width:1px;height:23px;background:#f5f5f5;"></div>
<div style="left:1191px;top:186px;width:150px;height:23px;background:linear-gradient(#ebf3fd 0,#ebf3fd 9px,#d9e8fb 10px,#d9e8fb 100%);border-right:1px solid #c9dcf5;box-sizing:border-box;"></div>
<svg style="left:1261.5px;top:195px" width="8" height="5"><path d="M0 4.5l4-4 4 4z" fill="#5b8dd9"/></svg>
<div style="left:1357px;top:186px;width:1px;height:23px;background:#d0d0d0;"></div>
<div style="left:1341px;top:186px;width:1px;height:23px;background:#f5f5f5;"></div>
<div style="left:318px;top:210px;width:1023px;height:21px;background:#fff;border-bottom:1px solid #ededed;box-sizing:border-box;"></div>
<div style="left:318px;top:231px;width:1023px;height:21px;background:#fafafa;border-bottom:1px solid #ededed;box-sizing:border-box;"></div>
<div style="left:318px;top:252px;width:1023px;height:21px;background:#fff;border-bottom:1px solid #ededed;box-sizing:border-box;"></div>
<div style="left:318px;top:273px;width:1023px;height:21px;background:#fafafa;border-bottom:1px solid #ededed;box-sizing:border-box;"></div>
<div style="left:318px;top:294px;width:1023px;height:21px;background:#fff;border-bottom:1px solid #ededed;box-sizing:border-box;"></div>
<div style="left:318px;top:315px;width:1023px;height:21px;background:#fafafa;border-bottom:1px solid #ededed;box-sizing:border-box;"></div>
<div style="left:318px;top:336px;width:1023px;height:11px;background:#fff;"></div>
<div style="left:1341px;top:210px;width:17px;height:137px;background:#f1f1f1;"></div>
<div style="left:1343px;top:227px;width:13px;height:97px;background:#c1c1c1;"></div>
<svg style="left:1345px;top:217px" width="9" height="5"><path d="M0.5 4.5h8l-4-4z" fill="#a3a3a3"/></svg>
<svg style="left:1345px;top:336px" width="9" height="5"><path d="M0.5 0.5h8l-4 4z" fill="#505050"/></svg>
<div style="left:317px;top:354px;width:518px;height:200px;border:1px solid #99bbe8;box-sizing:border-box;background:#fff;"></div>
<div style="left:318px;top:355px;width:516px;height:24px;background:linear-gradient(#dbe7f5 0,#d3e1f3 11px,#b9ceec 12px,#c6d8f1 100%);"></div>
<div style="left:318px;top:379px;width:516px;height:1px;background:#99bbe8;"></div>
<div style="left:318px;top:355px;width:516px;height:1px;background:rgba(255,255,255,.75);"></div>
<div style="left:318px;top:355px;width:1px;height:24px;background:rgba(255,255,255,.6);"></div>
<div style="left:318px;top:380px;width:516px;height:26px;background:linear-gradient(#dbe6f4,#d2dff0);"></div>
<div style="left:318px;top:406px;width:516px;height:1px;background:#a3c1e8;"></div>
<div style="left:324px;top:386px;width:16px;height:16px;"><svg width="16" height="16" viewBox="0 0 16 16"><path d="M6.6 1.9l3.6 2.7-3.6 2.7v-1.9h-1.2v-1.6h1.2z" fill="#12a116"/><path d="M5.6 4q-1.4.3-1.4 1.9v2" fill="none" stroke="#0e7a78" stroke-width="1.2"/><path d="M8.6 7.9l-3.6 2.7 3.6 2.7v-1.9h1.2v-1.6h-1.2z" fill="#12a116"/><path d="M9.6 11.2q1.4-.3 1.4-1.9v-2" fill="none" stroke="#0e7a78" stroke-width="1.2"/></svg></div>
<div style="left:347px;top:385px;width:16px;height:16px;"><svg width="16" height="16" viewBox="0 0 16 16"><defs><linearGradient id="g15" x1="0" y1="0" x2="1" y2="1"><stop offset="0" stop-color="#ffffff"/><stop offset="0.55" stop-color="#f4f9fe"/><stop offset="1" stop-color="#bfe6fa"/></linearGradient></defs><rect x="2.5" y="4.5" width="13" height="10" fill="url(#g15)" stroke="#7a78b8"/><path d="M10 6.8h3.5M9 8.8h1M11 8.8h2.5M9 10.8h4.5M4.5 12.8h1.5M7.5 12.8h6" stroke="#8a86c2" stroke-width="1.1"/><defs><linearGradient id="g14" x1="0" y1="0" x2="0" y2="1"><stop offset="0" stop-color="#b5f53a"/><stop offset="1" stop-color="#74c814"/></linearGradient></defs><path d="M4.2 0.5h3.3v3.2h3.2v3.3h-3.2v3.2h-3.3v-3.2h-3.2v-3.3h3.2z" fill="url(#g14)" stroke="#3b7d08" stroke-width="1"/></svg></div>
<div style="left:428px;top:385px;width:16px;height:16px;"><svg width="16" height="16" viewBox="0 0 16 16"><g opacity=".3"><defs><linearGradient id="g16" x1="0" y1="0" x2="1" y2="1"><stop offset="0" stop-color="#ffffff"/><stop offset="0.55" stop-color="#f4f9fe"/><stop offset="1" stop-color="#bfe6fa"/></linearGradient></defs><rect x="2.5" y="4.5" width="13" height="10" fill="url(#g16)" stroke="#7a78b8"/><path d="M4.5 6.8h1.5M4.5 8.8h2M11.5 8.8h2.5M4.5 10.8h1.5M7.5 10.8h6.5M4.5 12.8h1.5M7.5 12.8h6.5" stroke="#8a86c2" stroke-width="1.1"/><path d="M7 7.5l1.5 1.3 8-7.2-1.6-1.5z" fill="#e3cf8f" stroke="#cbb26a" stroke-width=".6"/><path d="M7 7.5l-.8 2 2.3-.7z" fill="#d8c49a"/></g></svg></div>
<div style="left:508px;top:385px;width:16px;height:16px;"><svg width="16" height="16" viewBox="0 0 16 16"><g opacity=".3"><defs><linearGradient id="g17" x1="0" y1="0" x2="1" y2="1"><stop offset="0" stop-color="#ffffff"/><stop offset="0.55" stop-color="#f4f9fe"/><stop offset="1" stop-color="#bfe6fa"/></linearGradient></defs><rect x="2.5" y="4.5" width="13" height="10" fill="url(#g17)" stroke="#7a78b8"/><path d="M10 6.8h3.5M9 8.8h1M11 8.8h2.5M9 10.8h4.5M4.5 12.8h1.5M7.5 12.8h6" stroke="#8a86c2" stroke-width="1.1"/></g><g opacity=".55"><path d="M1.6 1.4l9 8.8M10.8 2l-8.6 7.6" stroke="#e07882" stroke-width="1.9" stroke-linecap="round"/></g></svg></div>
<div style="left:318px;top:407px;width:516px;height:23px;background:linear-gradient(#fbfbfb 0,#f1f1f1 50%,#e6e6e6 100%);"></div>
<div style="left:318px;top:430px;width:516px;height:1px;background:#d0d0d0;"></div>
<div style="left:367px;top:407px;width:1px;height:23px;background:#d0d0d0;"></div>
<div style="left:427px;top:407px;width:1px;height:23px;background:#d0d0d0;"></div>
<div style="left:368px;top:407px;width:1px;height:23px;background:#f5f5f5;"></div>
<div style="left:428px;top:407px;width:100px;height:23px;background:linear-gradient(#ebf3fd 0,#ebf3fd 9px,#d9e8fb 10px,#d9e8fb 100%);border-right:1px solid #c9dcf5;box-sizing:border-box;"></div>
<svg style="left:466.0px;top:416px" width="8" height="5"><path d="M0 4.5l4-4 4 4z" fill="#5b8dd9"/></svg>
<div style="left:833px;top:407px;width:1px;height:23px;background:#d0d0d0;"></div>
<div style="left:528px;top:407px;width:1px;height:23px;background:#f5f5f5;"></div>
<div style="left:318px;top:431px;width:516px;height:21px;background:#fff;border-bottom:1px solid #ededed;box-sizing:border-box;"></div>
<div style="left:841px;top:354px;width:518px;height:200px;border:1px solid #99bbe8;box-sizing:border-box;background:#fff;"></div>
<div style="left:842px;top:355px;width:516px;height:24px;background:linear-gradient(#dbe7f5 0,#d3e1f3 11px,#b9ceec 12px,#c6d8f1 100%);"></div>
<div style="left:842px;top:379px;width:516px;height:1px;background:#99bbe8;"></div>
<div style="left:842px;top:355px;width:516px;height:1px;background:rgba(255,255,255,.75);"></div>
<div style="left:842px;top:355px;width:1px;height:24px;background:rgba(255,255,255,.6);"></div>
<div style="left:842px;top:380px;width:516px;height:26px;background:linear-gradient(#dbe6f4,#d2dff0);"></div>
<div style="left:842px;top:406px;width:516px;height:1px;background:#a3c1e8;"></div>
<div style="left:848px;top:386px;width:16px;height:16px;"><svg width="16" height="16" viewBox="0 0 16 16"><path d="M6.6 1.9l3.6 2.7-3.6 2.7v-1.9h-1.2v-1.6h1.2z" fill="#12a116"/><path d="M5.6 4q-1.4.3-1.4 1.9v2" fill="none" stroke="#0e7a78" stroke-width="1.2"/><path d="M8.6 7.9l-3.6 2.7 3.6 2.7v-1.9h1.2v-1.6h-1.2z" fill="#12a116"/><path d="M9.6 11.2q1.4-.3 1.4-1.9v-2" fill="none" stroke="#0e7a78" stroke-width="1.2"/></svg></div>
<div style="left:871px;top:385px;width:16px;height:16px;"><svg width="16" height="16" viewBox="0 0 16 16"><defs><linearGradient id="g15" x1="0" y1="0" x2="1" y2="1"><stop offset="0" stop-color="#ffffff"/><stop offset="0.55" stop-color="#f4f9fe"/><stop offset="1" stop-color="#bfe6fa"/></linearGradient></defs><rect x="2.5" y="4.5" width="13" height="10" fill="url(#g15)" stroke="#7a78b8"/><path d="M10 6.8h3.5M9 8.8h1M11 8.8h2.5M9 10.8h4.5M4.5 12.8h1.5M7.5 12.8h6" stroke="#8a86c2" stroke-width="1.1"/><defs><linearGradient id="g14" x1="0" y1="0" x2="0" y2="1"><stop offset="0" stop-color="#b5f53a"/><stop offset="1" stop-color="#74c814"/></linearGradient></defs><path d="M4.2 0.5h3.3v3.2h3.2v3.3h-3.2v3.2h-3.3v-3.2h-3.2v-3.3h3.2z" fill="url(#g14)" stroke="#3b7d08" stroke-width="1"/></svg></div>
<div style="left:952px;top:385px;width:16px;height:16px;"><svg width="16" height="16" viewBox="0 0 16 16"><g opacity=".3"><defs><linearGradient id="g16" x1="0" y1="0" x2="1" y2="1"><stop offset="0" stop-color="#ffffff"/><stop offset="0.55" stop-color="#f4f9fe"/><stop offset="1" stop-color="#bfe6fa"/></linearGradient></defs><rect x="2.5" y="4.5" width="13" height="10" fill="url(#g16)" stroke="#7a78b8"/><path d="M4.5 6.8h1.5M4.5 8.8h2M11.5 8.8h2.5M4.5 10.8h1.5M7.5 10.8h6.5M4.5 12.8h1.5M7.5 12.8h6.5" stroke="#8a86c2" stroke-width="1.1"/><path d="M7 7.5l1.5 1.3 8-7.2-1.6-1.5z" fill="#e3cf8f" stroke="#cbb26a" stroke-width=".6"/><path d="M7 7.5l-.8 2 2.3-.7z" fill="#d8c49a"/></g></svg></div>
<div style="left:1032px;top:385px;width:16px;height:16px;"><svg width="16" height="16" viewBox="0 0 16 16"><g opacity=".3"><defs><linearGradient id="g17" x1="0" y1="0" x2="1" y2="1"><stop offset="0" stop-color="#ffffff"/><stop offset="0.55" stop-color="#f4f9fe"/><stop offset="1" stop-color="#bfe6fa"/></linearGradient></defs><rect x="2.5" y="4.5" width="13" height="10" fill="url(#g17)" stroke="#7a78b8"/><path d="M10 6.8h3.5M9 8.8h1M11 8.8h2.5M9 10.8h4.5M4.5 12.8h1.5M7.5 12.8h6" stroke="#8a86c2" stroke-width="1.1"/></g><g opacity=".55"><path d="M1.6 1.4l9 8.8M10.8 2l-8.6 7.6" stroke="#e07882" stroke-width="1.9" stroke-linecap="round"/></g></svg></div>
<div style="left:842px;top:407px;width:516px;height:23px;background:linear-gradient(#fbfbfb 0,#f1f1f1 50%,#e6e6e6 100%);"></div>
<div style="left:842px;top:430px;width:516px;height:1px;background:#d0d0d0;"></div>
<div style="left:891px;top:407px;width:1px;height:23px;background:#d0d0d0;"></div>
<div style="left:951px;top:407px;width:1px;height:23px;background:#d0d0d0;"></div>
<div style="left:892px;top:407px;width:1px;height:23px;background:#f5f5f5;"></div>
<div style="left:952px;top:407px;width:100px;height:23px;background:linear-gradient(#ebf3fd 0,#ebf3fd 9px,#d9e8fb 10px,#d9e8fb 100%);border-right:1px solid #c9dcf5;box-sizing:border-box;"></div>
<svg style="left:990.0px;top:416px" width="8" height="5"><path d="M0 4.5l4-4 4 4z" fill="#5b8dd9"/></svg>
<div style="left:1111px;top:407px;width:1px;height:23px;background:#d0d0d0;"></div>
<div style="left:1052px;top:407px;width:1px;height:23px;background:#f5f5f5;"></div>
<div style="left:1237px;top:407px;width:1px;height:23px;background:#d0d0d0;"></div>
<div style="left:1112px;top:407px;width:1px;height:23px;background:#f5f5f5;"></div>
<div style="left:1297px;top:407px;width:1px;height:23px;background:#d0d0d0;"></div>
<div style="left:1238px;top:407px;width:1px;height:23px;background:#f5f5f5;"></div>
<div style="left:1357px;top:407px;width:1px;height:23px;background:#d0d0d0;"></div>
<div style="left:1298px;top:407px;width:1px;height:23px;background:#f5f5f5;"></div>
<div style="left:842px;top:431px;width:516px;height:21px;background:#fff;border-bottom:1px solid #ededed;box-sizing:border-box;"></div>
<div id="txt" style="left:0;top:0;width:1365px;height:540px;will-change:transform;">
<span style="left:58.7px;top:8px;font-size:11px;font-weight:normal;color:#000;letter-spacing:0.11px;-webkit-text-stroke:0.2px #000;">Структура и материалы</span>
<span style="left:58.7px;top:29px;font-size:11px;font-weight:normal;color:#000;letter-spacing:0.06px;-webkit-text-stroke:0.2px #000;">Материалы</span>
<span style="left:58.7px;top:50px;font-size:11px;font-weight:normal;color:#000;letter-spacing:0.17px;-webkit-text-stroke:0.2px #000;">Шаблоны виджетов</span>
<span style="left:58.7px;top:71px;font-size:11px;font-weight:normal;color:#000;letter-spacing:0.08px;-webkit-text-stroke:0.2px #000;">Области</span>
<span style="left:58.7px;top:92px;font-size:11px;font-weight:normal;color:#000;letter-spacing:0.20px;-webkit-text-stroke:0.2px #000;">Меню</span>
<span style="left:58.7px;top:113px;font-size:11px;font-weight:normal;color:#000;letter-spacing:-0.15px;-webkit-text-stroke:0.2px #000;">Комментарии</span>
<span style="left:58.7px;top:134px;font-size:11px;font-weight:normal;color:#000;letter-spacing:0.10px;-webkit-text-stroke:0.2px #000;">Конструктор форм</span>
<span style="left:58.7px;top:155px;font-size:11px;font-weight:normal;color:#000;letter-spacing:0.25px;-webkit-text-stroke:0.2px #000;">Фотогалереи</span>
<span style="left:58.7px;top:176px;font-size:11px;font-weight:normal;color:#000;letter-spacing:-0.07px;-webkit-text-stroke:0.2px #000;">Рассылки</span>
<span style="left:58.7px;top:197px;font-size:11px;font-weight:normal;color:#000;letter-spacing:0.08px;-webkit-text-stroke:0.2px #000;">Магазин</span>
<span style="left:42.7px;top:218px;font-size:11px;font-weight:normal;color:#000;letter-spacing:-0.18px;-webkit-text-stroke:0.2px #000;">Сервис</span>
<span style="left:58.7px;top:239px;font-size:11px;font-weight:normal;color:#000;letter-spacing:0.20px;-webkit-text-stroke:0.2px #000;">Настройки</span>
<span style="left:17.9px;top:301px;font-size:11px;font-weight:bold;color:#15428b;letter-spacing:0.79px;-webkit-text-stroke:0.35px #15428b;">Структура</span>
<span style="left:43.2px;top:352px;font-size:11px;font-weight:normal;color:#000;letter-spacing:0.33px;-webkit-text-stroke:0.2px #000;">root</span>
<span style="left:59.5px;top:373px;font-size:11px;font-weight:normal;color:#3a6ea5;letter-spacing:0.05px;">derevnyamira.ru</span>
<span style="left:145.0px;top:373px;font-size:11px;font-weight:normal;color:#000;letter-spacing:-0.18px;-webkit-text-stroke:0.2px #000;">Деревня Мира</span>
<span style="left:320.7px;top:-8px;font-size:11px;font-weight:bold;color:#15428b;letter-spacing:0.44px;-webkit-text-stroke:0.35px #15428b;">Настройки магазина</span>
<span style="left:317.7px;top:21px;font-size:12px;font-weight:normal;color:#000;letter-spacing:0.19px;-webkit-text-stroke:0.2px #000;">Email отдела продаж:</span>
<span style="left:319.0px;top:48px;font-size:12px;font-weight:normal;color:#000;letter-spacing:0.32px;-webkit-text-stroke:0.2px #000;">Точность цены (десятичных знаков):</span>
<span style="left:626.2px;top:48px;font-size:12px;font-weight:normal;color:#000;letter-spacing:0.00px;-webkit-text-stroke:0.2px #000;">2</span>
<span style="left:641.1px;top:75px;font-size:12px;font-weight:normal;color:#000;letter-spacing:0.25px;-webkit-text-stroke:0.2px #000;">учет остатков товаров</span>
<span style="left:328.6px;top:112px;font-size:11px;font-weight:normal;color:#333;letter-spacing:0.15px;-webkit-text-stroke:0.2px #333;">Сохранить</span>
<span style="left:323.7px;top:141px;font-size:11px;font-weight:bold;color:#15428b;letter-spacing:0.35px;-webkit-text-stroke:0.35px #15428b;">Настройки фильтра</span>
<span style="left:366.9px;top:167px;font-size:11px;font-weight:normal;color:#000;letter-spacing:0.17px;-webkit-text-stroke:0.2px #000;">Добавить</span>
<span style="left:447.9px;top:167px;font-size:11px;font-weight:normal;color:#c2cbd7;letter-spacing:-0.11px;">Изменить</span>
<span style="left:527.3px;top:167px;font-size:11px;font-weight:normal;color:#c2cbd7;letter-spacing:0.42px;">Удалить</span>
<span style="left:322.7px;top:193px;font-size:11px;font-weight:normal;color:#000;letter-spacing:0.50px;-webkit-text-stroke:0.2px #000;">ID</span>
<span style="left:372.7px;top:193px;font-size:11px;font-weight:normal;color:#000;letter-spacing:-0.23px;-webkit-text-stroke:0.2px #000;">Поле</span>
<span style="left:647.3px;top:193px;font-size:11px;font-weight:normal;color:#000;letter-spacing:-0.25px;-webkit-text-stroke:0.2px #000;">Вид</span>
<span style="left:923.2px;top:193px;font-size:11px;font-weight:normal;color:#000;letter-spacing:0.01px;-webkit-text-stroke:0.2px #000;">Только для раздела</span>
<span style="left:1195.6px;top:193px;font-size:11px;font-weight:normal;color:#000;letter-spacing:0.16px;-webkit-text-stroke:0.2px #000;">Сортировка</span>
<span style="left:1341.0px;top:193px;font-size:11px;font-weight:normal;color:#000;letter-spacing:0.00px;-webkit-text-stroke:0.2px #000;"></span>
<span style="left:320.7px;top:215px;font-size:11px;font-weight:normal;color:#000;letter-spacing:-0.35px;-webkit-text-stroke:0.2px #000;">155</span>
<span style="left:373.6px;top:215px;font-size:11px;font-weight:normal;color:#000;letter-spacing:0.02px;-webkit-text-stroke:0.2px #000;">Товары - Дом или участок</span>
<span style="left:647.4px;top:215px;font-size:11px;font-weight:normal;color:#000;letter-spacing:0.60px;-webkit-text-stroke:0.2px #000;">Флажки</span>
<span style="left:1196.0px;top:215px;font-size:11px;font-weight:normal;color:#000;letter-spacing:0.10px;-webkit-text-stroke:0.2px #000;">10</span>
<span style="left:320.7px;top:236px;font-size:11px;font-weight:normal;color:#000;letter-spacing:-0.35px;-webkit-text-stroke:0.2px #000;">143</span>
<span style="left:373.6px;top:236px;font-size:11px;font-weight:normal;color:#000;letter-spacing:-0.05px;-webkit-text-stroke:0.2px #000;">Товары - Стоимость</span>
<span style="left:647.4px;top:236px;font-size:11px;font-weight:normal;color:#000;letter-spacing:0.20px;-webkit-text-stroke:0.2px #000;">Число от-до</span>
<span style="left:1196.0px;top:236px;font-size:11px;font-weight:normal;color:#000;letter-spacing:0.10px;-webkit-text-stroke:0.2px #000;">15</span>
<span style="left:320.7px;top:257px;font-size:11px;font-weight:normal;color:#000;letter-spacing:-0.35px;-webkit-text-stroke:0.2px #000;">108</span>
<span style="left:373.6px;top:257px;font-size:11px;font-weight:normal;color:#000;letter-spacing:-0.05px;-webkit-text-stroke:0.2px #000;">Товары - Полезная площадь</span>
<span style="left:647.4px;top:257px;font-size:11px;font-weight:normal;color:#000;letter-spacing:0.20px;-webkit-text-stroke:0.2px #000;">Число от-до</span>
<span style="left:1196.0px;top:257px;font-size:11px;font-weight:normal;color:#000;letter-spacing:0.10px;-webkit-text-stroke:0.2px #000;">20</span>
<span style="left:320.7px;top:278px;font-size:11px;font-weight:normal;color:#000;letter-spacing:-0.35px;-webkit-text-stroke:0.2px #000;">109</span>
<span style="left:373.6px;top:278px;font-size:11px;font-weight:normal;color:#000;letter-spacing:0.03px;-webkit-text-stroke:0.2px #000;">Товары - Площадь участка</span>
<span style="left:647.4px;top:278px;font-size:11px;font-weight:normal;color:#000;letter-spacing:0.20px;-webkit-text-stroke:0.2px #000;">Число от-до</span>
<span style="left:1196.2px;top:278px;font-size:11px;font-weight:normal;color:#000;letter-spacing:-0.10px;-webkit-text-stroke:0.2px #000;">40</span>
<span style="left:320.7px;top:299px;font-size:11px;font-weight:normal;color:#000;letter-spacing:-0.35px;-webkit-text-stroke:0.2px #000;">105</span>
<span style="left:373.6px;top:299px;font-size:11px;font-weight:normal;color:#000;letter-spacing:0.07px;-webkit-text-stroke:0.2px #000;">Товары - Тип проекта</span>
<span style="left:647.4px;top:299px;font-size:11px;font-weight:normal;color:#000;letter-spacing:0.01px;-webkit-text-stroke:0.2px #000;">Выпадающее меню</span>
<span style="left:1196.0px;top:299px;font-size:11px;font-weight:normal;color:#000;letter-spacing:0.10px;-webkit-text-stroke:0.2px #000;">50</span>
<span style="left:320.7px;top:320px;font-size:11px;font-weight:normal;color:#000;letter-spacing:-0.35px;-webkit-text-stroke:0.2px #000;">152</span>
<span style="left:373.6px;top:320px;font-size:11px;font-weight:normal;color:#000;letter-spacing:0.07px;-webkit-text-stroke:0.2px #000;">Товары - Технология строительства</span>
<span style="left:647.4px;top:320px;font-size:11px;font-weight:normal;color:#000;letter-spacing:0.01px;-webkit-text-stroke:0.2px #000;">Выпадающее меню</span>
<span style="left:1196.0px;top:320px;font-size:11px;font-weight:normal;color:#000;letter-spacing:0.10px;-webkit-text-stroke:0.2px #000;">60</span>
<span style="left:320.7px;top:341px;font-size:11px;font-weight:normal;color:#000;letter-spacing:-0.35px;-webkit-text-stroke:0.2px #000;height:6px;overflow:hidden;">174</span>
<span style="left:373.6px;top:341px;font-size:11px;font-weight:normal;color:#000;letter-spacing:0.07px;-webkit-text-stroke:0.2px #000;height:6px;overflow:hidden;">Товары - Архитектурный стиль</span>
<span style="left:647.4px;top:341px;font-size:11px;font-weight:normal;color:#000;letter-spacing:0.01px;-webkit-text-stroke:0.2px #000;height:6px;overflow:hidden;">Выпадающее меню</span>
<span style="left:1196.0px;top:341px;font-size:11px;font-weight:normal;color:#000;letter-spacing:0.10px;-webkit-text-stroke:0.2px #000;height:6px;overflow:hidden;">70</span>
<span style="left:324.7px;top:362px;font-size:11px;font-weight:bold;color:#15428b;letter-spacing:0.39px;-webkit-text-stroke:0.35px #15428b;">Типы плательщиков</span>
<span style="left:366.9px;top:388px;font-size:11px;font-weight:normal;color:#000;letter-spacing:0.17px;-webkit-text-stroke:0.2px #000;">Добавить</span>
<span style="left:447.9px;top:388px;font-size:11px;font-weight:normal;color:#c2cbd7;letter-spacing:-0.11px;">Изменить</span>
<span style="left:527.3px;top:388px;font-size:11px;font-weight:normal;color:#c2cbd7;letter-spacing:0.42px;">Удалить</span>
<span style="left:322.7px;top:414px;font-size:11px;font-weight:normal;color:#000;letter-spacing:0.50px;-webkit-text-stroke:0.2px #000;">ID</span>
<span style="left:373.4px;top:414px;font-size:11px;font-weight:normal;color:#000;letter-spacing:1.20px;-webkit-text-stroke:0.2px #000;">Акт.</span>
<span style="left:432.4px;top:414px;font-size:11px;font-weight:normal;color:#000;letter-spacing:0.78px;-webkit-text-stroke:0.2px #000;">Сорт.</span>
<span style="left:532.5px;top:414px;font-size:11px;font-weight:normal;color:#000;letter-spacing:-0.07px;-webkit-text-stroke:0.2px #000;">Название</span>
<span style="left:321.3px;top:436px;font-size:11px;font-weight:normal;color:#000;letter-spacing:0.00px;-webkit-text-stroke:0.2px #000;">1</span>
<span style="left:373.8px;top:436px;font-size:11px;font-weight:normal;color:#000;letter-spacing:-0.80px;-webkit-text-stroke:0.2px #000;">Да</span>
<span style="left:433.0px;top:436px;font-size:11px;font-weight:normal;color:#000;letter-spacing:-0.10px;-webkit-text-stroke:0.2px #000;">100</span>
<span style="left:532.5px;top:436px;font-size:11px;font-weight:normal;color:#000;letter-spacing:0.00px;-webkit-text-stroke:0.2px #000;">Физическое лицо</span>
<span style="left:847.7px;top:362px;font-size:11px;font-weight:bold;color:#15428b;letter-spacing:1.06px;-webkit-text-stroke:0.35px #15428b;">Валюты</span>
<span style="left:890.9px;top:388px;font-size:11px;font-weight:normal;color:#000;letter-spacing:0.17px;-webkit-text-stroke:0.2px #000;">Добавить</span>
<span style="left:971.9px;top:388px;font-size:11px;font-weight:normal;color:#c2cbd7;letter-spacing:-0.11px;">Изменить</span>
<span style="left:1051.3px;top:388px;font-size:11px;font-weight:normal;color:#c2cbd7;letter-spacing:0.42px;">Удалить</span>
<span style="left:846.7px;top:414px;font-size:11px;font-weight:normal;color:#000;letter-spacing:0.50px;-webkit-text-stroke:0.2px #000;">ID</span>
<span style="left:896.3px;top:414px;font-size:11px;font-weight:normal;color:#000;letter-spacing:0.18px;-webkit-text-stroke:0.2px #000;">Валюта</span>
<span style="left:956.5px;top:414px;font-size:11px;font-weight:normal;color:#000;letter-spacing:0.75px;-webkit-text-stroke:0.2px #000;">Сорт.</span>
<span style="left:1057.0px;top:414px;font-size:11px;font-weight:normal;color:#000;letter-spacing:0.00px;-webkit-text-stroke:0.2px #000;">Базовая</span>
<span style="left:1116.6px;top:414px;font-size:11px;font-weight:normal;color:#000;letter-spacing:-0.09px;-webkit-text-stroke:0.2px #000;">Название</span>
<span style="left:1242.3px;top:414px;font-size:11px;font-weight:normal;color:#000;letter-spacing:-0.38px;-webkit-text-stroke:0.2px #000;">Номинал</span>
<span style="left:1302.5px;top:414px;font-size:11px;font-weight:normal;color:#000;letter-spacing:0.40px;-webkit-text-stroke:0.2px #000;">Курс</span>
<span style="left:845.3px;top:436px;font-size:11px;font-weight:normal;color:#000;letter-spacing:0.00px;-webkit-text-stroke:0.2px #000;">1</span>
<span style="left:896.2px;top:436px;font-size:11px;font-weight:normal;color:#000;letter-spacing:-0.80px;-webkit-text-stroke:0.2px #000;">RUB</span>
<span style="left:956.9px;top:436px;font-size:11px;font-weight:normal;color:#000;letter-spacing:0.00px;-webkit-text-stroke:0.2px #000;">100</span>
<span style="left:1058.0px;top:436px;font-size:11px;font-weight:normal;color:#000;letter-spacing:-0.80px;-webkit-text-stroke:0.2px #000;">Да</span>
<span style="left:1116.6px;top:436px;font-size:11px;font-weight:normal;color:#000;letter-spacing:-0.27px;-webkit-text-stroke:0.2px #000;">Рубль</span>
<span style="left:1243.7px;top:436px;font-size:11px;font-weight:normal;color:#000;letter-spacing:0.00px;-webkit-text-stroke:0.2px #000;">1</span>
<span style="left:1303.8px;top:436px;font-size:11px;font-weight:normal;color:#000;letter-spacing:0.00px;-webkit-text-stroke:0.2px #000;">1</span>
</div>
</body></html>
